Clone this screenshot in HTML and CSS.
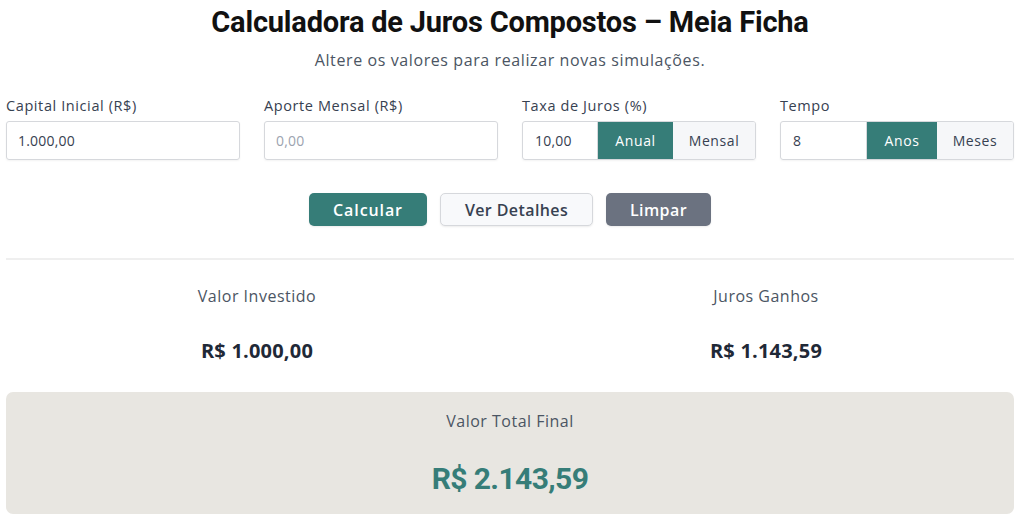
FILE: index.html
```html
<!DOCTYPE html>
<html lang="pt-BR">
<head>
<meta charset="utf-8">
<link rel="stylesheet" href="styles.css">
</head>
<body>
<main class="calc">
  <header class="head">
    <h1 class="title">Calculadora de Juros Compostos – Meia Ficha</h1>
    <p class="subtitle">Altere os valores para realizar novas simulações.</p>
  </header>
  <section class="fields">
    <div class="field">
      <label class="label">Capital Inicial (R$)</label>
      <div class="input"><span class="val">1.000,00</span></div>
    </div>
    <div class="field">
      <label class="label">Aporte Mensal (R$)</label>
      <div class="input"><span class="ph">0,00</span></div>
    </div>
    <div class="field">
      <label class="label">Taxa de Juros (%)</label>
      <div class="group">
        <div class="gin g-rate"><span class="val">10,00</span></div>
        <div class="seg active s-anual">Anual</div>
        <div class="seg s-mensal">Mensal</div>
      </div>
    </div>
    <div class="field">
      <label class="label">Tempo</label>
      <div class="group">
        <div class="gin g-time"><span class="val">8</span></div>
        <div class="seg active s-anos">Anos</div>
        <div class="seg s-meses">Meses</div>
      </div>
    </div>
  </section>
  <div class="actions">
    <button class="btn primary">Calcular</button>
    <button class="btn light">Ver Detalhes</button>
    <button class="btn gray">Limpar</button>
  </div>
  <hr class="divider">
  <section class="results">
    <div class="res">
      <div class="res-label">Valor Investido</div>
      <div class="res-value">R$ 1.000,00</div>
    </div>
    <div class="res">
      <div class="res-label">Juros Ganhos</div>
      <div class="res-value">R$ 1.143,59</div>
    </div>
  </section>
  <section class="total">
    <div class="total-label">Valor Total Final</div>
    <div class="total-value">R$ 2.143,59</div>
  </section>
</main>
</body>
</html>
```
FILE: styles.css
```css
* { box-sizing: border-box; }
html, body { margin: 0; padding: 0; background: #fff; }
body { font-family: "Open Sans", "Liberation Sans", sans-serif; color: #1f2937; }
.calc { width: 1008px; margin: 0 6px; }
.head { text-align: center; padding-top: 5px; }
.title { margin: 0; font-family: Roboto, "Liberation Sans", sans-serif; font-weight: 700; font-size: 29px; line-height: 34px; color: #111; letter-spacing: -0.2px; }
.subtitle { margin: 10px 0 0; font-size: 16px; line-height: 22px; color: #4b5563; letter-spacing: 0.6px; }
.fields { display: grid; grid-template-columns: repeat(4, 1fr); gap: 24px; margin-top: 26px; }
.field { display: flex; flex-direction: column; }
.label { font-size: 14.5px; line-height: 18px; color: #374151; font-weight: 500; margin-bottom: 6px; letter-spacing: 0.6px; }
.input, .group { height: 39px; border: 1px solid #d6d8dc; border-radius: 3px; display: flex; align-items: center; box-shadow: 0 1px 2px rgba(0,0,0,0.05); overflow: hidden; }
.input { padding-left: 11px; font-size: 14px; }
.val { color: #374151; font-size: 14px; letter-spacing: 0.2px; }
.ph { color: #9ca3af; font-size: 14px; letter-spacing: 0.2px; }
.group { align-items: stretch; }
.gin { display: flex; align-items: center; padding-left: 12px; font-size: 14px; border-right: 1px solid #d6d8dc; }
.g-rate { width: 75px; }
.g-time { width: 86px; }
.seg { display: flex; align-items: center; justify-content: center; font-size: 14px; color: #374151; background: #f6f7f9; flex: 1; font-weight: 500; letter-spacing: 0.6px; }
.seg.active { background: #367d78; color: #fff; flex: none; }
.s-anual { width: 75px; }
.s-anos { width: 70px; }
.actions { display: flex; justify-content: center; gap: 13px; margin-top: 33px; }
.btn { font-family: inherit; font-size: 16px; font-weight: 600; height: 33px; border-radius: 5px; border: 1px solid transparent; padding: 0; box-shadow: 0 1px 2px rgba(0,0,0,0.08); letter-spacing: 0.4px; }
.primary { background: #367d78; color: #fff; width: 118px; letter-spacing: 0.9px; }
.light { background: #f8f9fb; color: #374151; border-color: #d6d8dc; width: 153px; }
.gray { background: #6b7280; color: #fff; width: 105px; }
.divider { border: 0; border-top: 2px solid #efefef; margin: 32px 0 0; }
.results { display: grid; grid-template-columns: 1fr 1fr; gap: 16px; margin-top: 25px; text-align: center; }
.res:first-child { padding-left: 6px; }
.res-label { font-size: 16px; line-height: 22px; color: #4b5563; letter-spacing: 0.5px; }
.res-value { font-size: 20px; font-weight: 700; line-height: 26px; color: #1f2937; margin-top: 31px; letter-spacing: 0.2px; }
.total { margin-top: 28px; background: #e8e6e1; border-radius: 7px; height: 122px; text-align: center; padding-top: 18px; }
.total-label { font-size: 16px; line-height: 22px; color: #4b5563; letter-spacing: 0.5px; }
.total-value { font-family: Roboto, "Liberation Sans", sans-serif; font-size: 30px; font-weight: 700; line-height: 36px; color: #367d78; margin-top: 29px; letter-spacing: -0.6px; }
```
